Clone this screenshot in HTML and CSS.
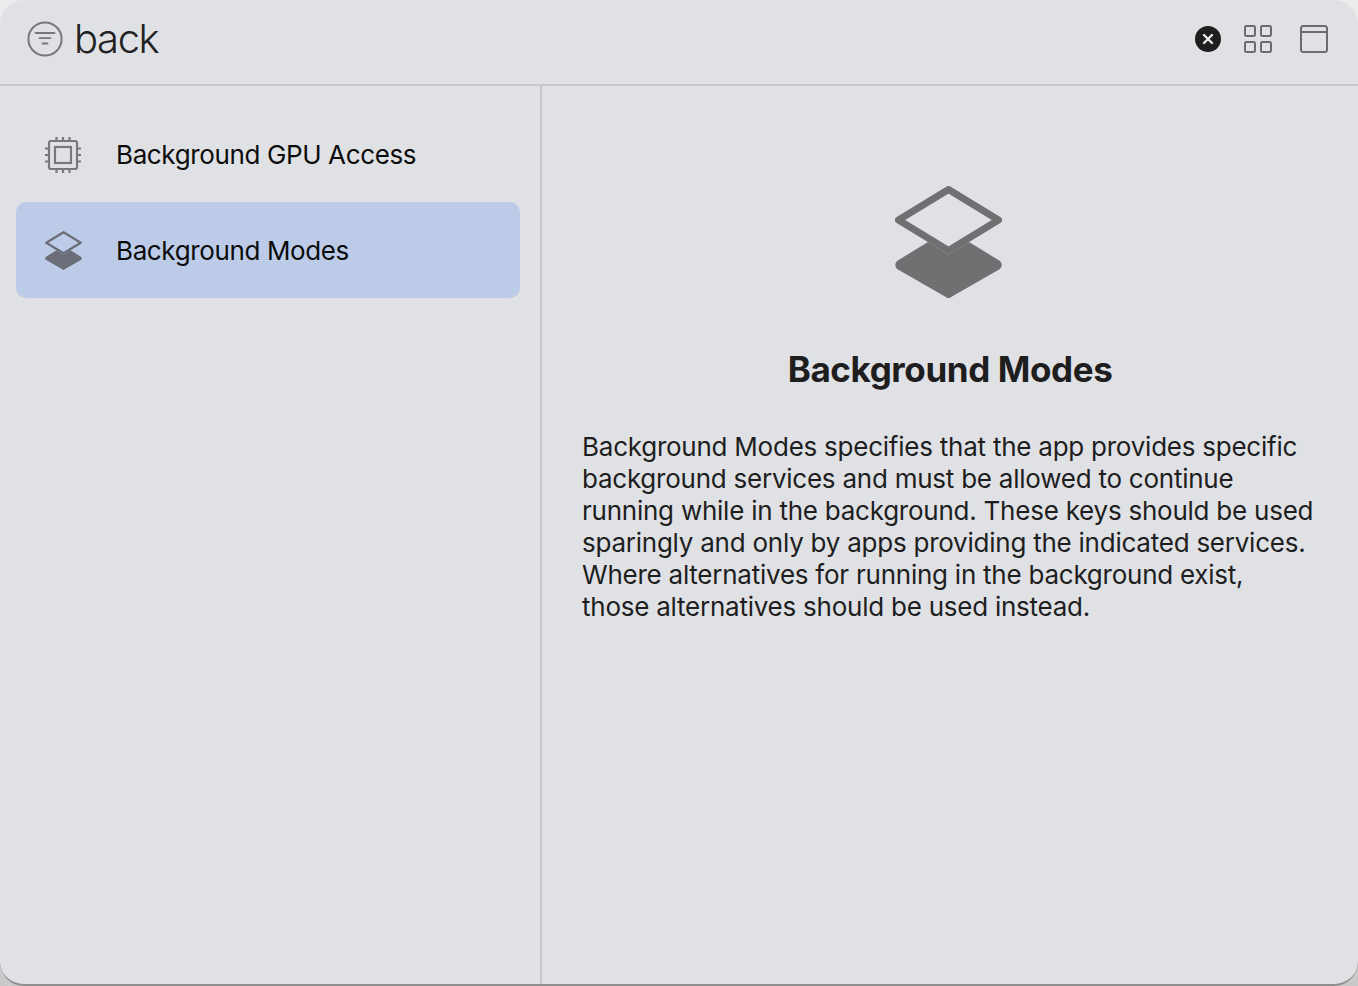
FILE: index.html
```html
<!DOCTYPE html>
<html lang="en">
<head>
    <meta charset="UTF-8">
    <meta name="viewport" content="width=device-width, initial-scale=1.0">
    <title>Capabilities</title>
    <link rel="stylesheet" href="styles.css">
</head>
<body>
    <div class="window">
        <!-- Search bar -->
        <header class="toolbar">
            <svg class="filter-icon" width="36" height="36" viewBox="0 0 36 36" fill="none" stroke="#77787c">
                <circle cx="18" cy="18" r="16.6" stroke-width="2"/>
                <path d="M8.500 12h19M12.500 17.200h11M15.500 22.500h5" stroke-width="1.800" stroke-linecap="round"/>
            </svg>
            <span class="search-text">back</span>
            <div class="toolbar-actions">
                <svg class="clear-icon" width="26" height="26" viewBox="0 0 26 26">
                    <circle cx="13" cy="13" r="13" fill="#1f1f1f"/>
                    <path d="M9 9l8 8M17 9l-8 8" stroke="#e8e8ea" stroke-width="2.400" stroke-linecap="round"/>
                </svg>
                <svg class="grid-icon" width="28" height="28" viewBox="0 0 28 28" fill="none" stroke="#6b6c70" stroke-width="2">
                    <rect x="1" y="1" width="10" height="10" rx="1.500"/>
                    <rect x="17" y="1" width="10" height="10" rx="1.500"/>
                    <rect x="1" y="17" width="10" height="10" rx="1.500"/>
                    <rect x="17" y="17" width="10" height="10" rx="1.500"/>
                </svg>
                <svg class="panel-icon" width="28" height="28" viewBox="0 0 28 28" fill="none" stroke="#6b6c70" stroke-width="2">
                    <rect x="1" y="1" width="26" height="26" rx="2.500"/>
                    <path d="M1 7h26"/>
                </svg>
            </div>
        </header>

        <div class="content">
            <!-- Capability list -->
            <aside class="sidebar">
                <div class="item">
                    <svg class="item-icon" width="36" height="36" viewBox="0 0 36 36" fill="none" stroke="#77787c" stroke-width="2.200">
                        <rect x="4" y="4" width="28" height="28" rx="2"/>
                        <rect x="10" y="10" width="16" height="16"/>
                        <path d="M11.500 0v4M18 0v4M24.500 0v4M11.500 32v4M18 32v4M24.500 32v4M0 11.500h4M0 18h4M0 24.500h4M32 11.500h4M32 18h4M32 24.500h4"/>
                    </svg>
                    <span>Background GPU Access</span>
                </div>
                <div class="item selected">
                    <svg class="item-icon" width="37" height="39" viewBox="0 0 107 113">
                        <path d="M33 56L53.500 68.600 74 56 105 75Q108.500 79 105 83L57 110.500Q53.500 113.500 50 110.500L2 83Q-1.500 79 2 75Z" fill="#6b6e78"/>
                        <path d="M53.500 3.500L103.500 34 53.500 64.500 3.500 34Z" fill="none" stroke="#6b6e78" stroke-width="6.500" stroke-linejoin="round"/>
                    </svg>
                    <span>Background Modes</span>
                </div>
            </aside>

            <!-- Capability details -->
            <main class="detail">
                <svg class="detail-icon" width="107" height="113" viewBox="0 0 107 113">
                    <path d="M33 56L53.500 68.600 74 56 105 75Q108.500 79 105 83L57 110.500Q53.500 113.500 50 110.500L2 83Q-1.500 79 2 75Z" fill="#6f7072"/>
                    <path d="M53.500 3.500L103.500 34 53.500 64.500 3.500 34Z" fill="none" stroke="#6f7072" stroke-width="7" stroke-linejoin="round"/>
                </svg>
                <h1>Background Modes</h1>
                <p>Background Modes specifies that the app provides specific background services and must be allowed to continue running while in the background. These keys should be used sparingly and only by apps providing the indicated services. Where alternatives for running in the background exist, those alternatives should be used instead.</p>
            </main>
        </div>
    </div>
</body>
</html>
```

FILE: styles.css
```css
html, body { height: 100%; }

body {
    margin: 0;
    background: linear-gradient(#ececec, #c9c9c9);
    font-family: Inter, "Liberation Sans", sans-serif;
    color: #1e1e1e;
}

.window {
    height: 100%;
    box-sizing: border-box;
    display: flex;
    flex-direction: column;
    background-color: #e0e1e5;
    border-radius: 24px;
    border-bottom: 2px solid #8e8e90;
    overflow: hidden;
}

/* Search bar */
.toolbar {
    flex: none;
    height: 84px;
    box-sizing: border-box;
    display: flex;
    align-items: center;
    padding: 0 30px 6px 27px;
}

.search-text {
    margin-left: 11px;
    font-size: 40px;
    font-weight: 300;
    letter-spacing: -1.4px;
    line-height: 1;
    color: #222;
}

.toolbar-actions {
    margin-left: auto;
    display: flex;
    align-items: center;
    gap: 28px;
}

.clear-icon { margin-right: -5px; }

.content {
    flex: 1;
    display: flex;
    border-top: 2px solid #c6c7cb;
    min-height: 0;
}

/* Capability list */
.sidebar {
    flex: none;
    width: 542px;
    box-sizing: border-box;
    padding: 20px 20px 0 16px;
    border-right: 2px solid #c6c7cb;
}

.item {
    height: 96px;
    display: flex;
    align-items: center;
    padding-left: 29px;
    border-radius: 10px;
    font-size: 26px;
    letter-spacing: -0.37px;
    color: #0c0c0c;
}

.item span { margin-left: 35px; }

.item .item-icon { margin-top: 2px; }

.item.selected { background-color: #bccce8; }

.item.selected .item-icon { margin-top: 0; }

.item.selected span { margin-left: 34px; }

/* Capability details */
.detail {
    flex: 1;
    min-width: 0;
    box-sizing: border-box;
    padding: 100px 40px 0 40px;
    display: flex;
    flex-direction: column;
    align-items: center;
}

.detail-icon {
    flex: none;
    margin-right: 3px;
}

.detail h1 {
    margin: 48px 0 0;
    font-size: 35px;
    font-weight: 700;
    letter-spacing: -0.4px;
    line-height: 44px;
    color: #1e1e1e;
}

.detail p {
    margin: 40px 0 0;
    padding-right: 2px;
    align-self: stretch;
    font-size: 26px;
    letter-spacing: -0.24px;
    line-height: 32px;
}
```
